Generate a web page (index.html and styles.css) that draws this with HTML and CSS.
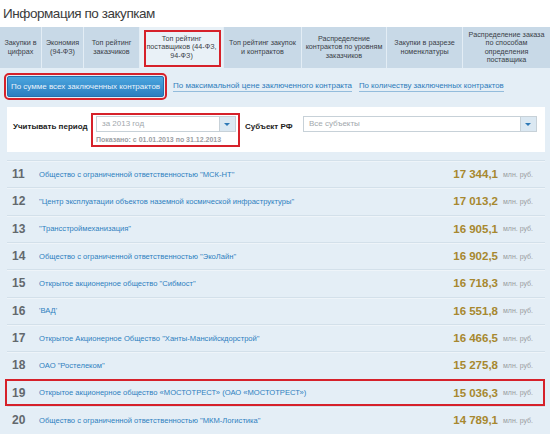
FILE: index.html
```html
<!DOCTYPE html>
<html lang="ru">
<head>
<meta charset="utf-8">
<title>Информация по закупкам</title>
<link rel="stylesheet" href="styles.css">
</head>
<body>
<div class="page">
  <h1 class="title">Информация по закупкам</h1>
  <nav class="tabs">
    <div class="tab w1">Закупки в<br>цифрах</div>
    <div class="tab w2">Экономия<br>(94-ФЗ)</div>
    <div class="tab w3">Топ рейтинг<br>заказчиков</div>
    <div class="tab w4 active"><span class="mark"></span>Топ рейтинг<br>поставщиков (44-ФЗ,<br>94-ФЗ)</div>
    <div class="tab w5">Топ рейтинг закупок<br>и контрактов</div>
    <div class="tab w6">Распределение<br>контрактов по уровням<br>заказчиков</div>
    <div class="tab w7">Закупки в разрезе<br>номенклатуры</div>
    <div class="tab w8">Распределение заказа<br>по способам<br>определения<br>поставщика</div>
  </nav>
  <section class="panel">
    <div class="modes">
      <button class="btn">По сумме всех заключенных контрактов</button>
      <a class="mode-link">По максимальной цене заключенного контракта</a>
      <a class="mode-link">По количеству заключенных контрактов</a>
    </div>
    <div class="filters">
      <div class="label">Учитывать период</div>
      <div class="period">
        <div class="select s1"><span class="value">за 2013 год</span><span class="arrow"></span></div>
        <div class="hint">Показано: с 01.01.2013 по 31.12.2013</div>
      </div>
      <div class="label l2">Субъект РФ</div>
      <div class="select s2"><span class="value">Все субъекты</span><span class="arrow"></span></div>
    </div>
    <ul class="list">
      <li class="row"><span class="rank">11</span><a class="name">Общество с ограниченной ответственностью "МСК-НТ"</a><span class="sum">17 344,1</span><span class="unit">млн. руб.</span></li>
      <li class="row"><span class="rank">12</span><a class="name">"Центр эксплуатации объектов наземной космической инфраструктуры"</a><span class="sum">17 013,2</span><span class="unit">млн. руб.</span></li>
      <li class="row"><span class="rank">13</span><a class="name">"Трансстроймеханизация"</a><span class="sum">16 905,1</span><span class="unit">млн. руб.</span></li>
      <li class="row"><span class="rank">14</span><a class="name">Общество с ограниченной ответственностью "ЭкоЛайн"</a><span class="sum">16 902,5</span><span class="unit">млн. руб.</span></li>
      <li class="row"><span class="rank">15</span><a class="name">Открытое акционерное общество "Сибмост"</a><span class="sum">16 718,3</span><span class="unit">млн. руб.</span></li>
      <li class="row"><span class="rank">16</span><a class="name">'ВАД'</a><span class="sum">16 551,8</span><span class="unit">млн. руб.</span></li>
      <li class="row"><span class="rank">17</span><a class="name">Открытое Акционерное Общество "Ханты-Мансийскдорстрой"</a><span class="sum">16 466,5</span><span class="unit">млн. руб.</span></li>
      <li class="row"><span class="rank">18</span><a class="name">ОАО "Ростелеком"</a><span class="sum">15 275,8</span><span class="unit">млн. руб.</span></li>
      <li class="row marked"><span class="rank">19</span><a class="name">Открытое акционерное общество «МОСТОТРЕСТ» (ОАО «МОСТОТРЕСТ»)</a><span class="sum">15 036,3</span><span class="unit">млн. руб.</span></li>
      <li class="row"><span class="rank">20</span><a class="name">Общество с ограниченной ответственностью "МКМ-Логистика"</a><span class="sum">14 789,1</span><span class="unit">млн. руб.</span></li>
    </ul>
  </section>
</div>
</body>
</html>
```

FILE: styles.css
```css
* { box-sizing: border-box; }
html, body { margin: 0; padding: 0; }
body {
  width: 550px;
  height: 434px;
  overflow: hidden;
  background: #ffffff;
  font-family: "Liberation Sans", Arial, sans-serif;
  color: #333;
}
.page { width: 550px; }
.title {
  margin: 0;
  height: 27px;
  padding: 5px 0 0 3px;
  font-size: 13.5px;
  letter-spacing: -0.45px;
  line-height: 17px;
  font-weight: normal;
  color: #3b3b3b;
}
.tabs {
  display: flex;
  height: 41px;
}
.tab {
  position: relative;
  display: flex;
  align-items: center;
  justify-content: center;
  text-align: center;
  background: #c8d9e7;
  border-right: 1px solid #e3edf5;
  font-size: 7.2px;
  line-height: 8.3px;
  color: #3a4148;
}
.w1 { width: 42px; }
.w2 { width: 42px; }
.w3 { width: 56px; }
.w4 { width: 84px; }
.w5 { width: 78px; }
.w6 { width: 85px; }
.w7 { width: 76px; }
.w8 { width: 87px; border-right: none; }
.tab.active { background: #e9f1f7; }
.tab .mark {
  position: absolute;
  left: 4px;
  right: 2px;
  top: 3px;
  bottom: 1px;
  border: 2px solid #d6212a;
}
.panel {
  background: #e4eef6;
  height: 366px;
  padding: 8px 5px 0 7px;
}
.modes {
  display: flex;
  align-items: center;
  height: 21px;
}
.btn {
  width: 157px;
  height: 21px;
  padding: 0;
  border: 1px solid #2470ad;
  border-radius: 2px;
  background: linear-gradient(#4ba5de, #2b7ec0);
  color: #eaf3fb;
  font-family: inherit;
  font-size: 8px;
  outline: 2px solid #d6212a;
  outline-offset: 1px;
}
.mode-link {
  margin-left: 9px;
  font-size: 8px;
  line-height: 10px;
  color: #2d7bbb;
  border-bottom: 1px solid #93bcdc;
}
.mode-link + .mode-link { margin-left: 7px; font-size: 7.8px; }
.filters {
  display: flex;
  align-items: flex-start;
  margin-top: 10px;
  height: 45px;
  background: #ffffff;
  padding: 9px 8px 0 6px;
}
.label {
  margin-top: 6px;
  font-size: 8px;
  font-weight: bold;
  color: #222;
  width: 83px;
}
.label.l2 { width: 58px; margin-left: 9px; }
.period {
  position: relative;
  width: 140px;
}
.period::after {
  content: "";
  position: absolute;
  left: -5px;
  right: -4px;
  top: -3px;
  bottom: -4px;
  border: 2px solid #d6212a;
}
.select {
  display: flex;
  height: 16px;
  border: 1px solid #c7d1d8;
  background: #fff;
}
.s1 { width: 140px; }
.s2 { width: 234px; }
.select .value {
  flex: 1;
  padding-left: 5px;
  font-size: 8px;
  line-height: 14px;
  color: #a2a8ad;
}
.select .arrow {
  position: relative;
  width: 16px;
  background: #dbe8f2;
  border-left: 1px solid #c7d1d8;
}
.select .arrow::before {
  content: "";
  position: absolute;
  left: 4px;
  top: 6px;
  border-left: 3.5px solid transparent;
  border-right: 3.5px solid transparent;
  border-top: 3.5px solid #2f79b6;
}
.hint {
  margin-top: 4px;
  font-size: 7px;
  font-weight: bold;
  color: #9b9ea3;
  white-space: nowrap;
}
.list {
  list-style: none;
  margin: 8px 0 0 0;
  padding: 0;
}
.row {
  position: relative;
  display: flex;
  align-items: center;
  height: 27.33px;
  padding: 0 10px 0 5px;
  border-top: 1px solid #d3e0ea;
  box-shadow: inset 0 1px 0 #eef4f9;
}
.row.marked::after {
  content: "";
  position: absolute;
  left: -2px;
  right: 0;
  top: -1px;
  bottom: 0;
  border: 2px solid #d6212a;
}
.rank {
  width: 27px;
  font-size: 12px;
  font-weight: bold;
  color: #62686d;
}
.name {
  flex: 1;
  font-size: 7.6px;
  color: #2e7fbf;
  white-space: nowrap;
}
.sum {
  font-size: 11.5px;
  font-weight: bold;
  color: #a7882f;
}
.unit {
  margin-left: 5px;
  width: 32px;
  font-size: 7px;
  color: #999c9f;
}
```
